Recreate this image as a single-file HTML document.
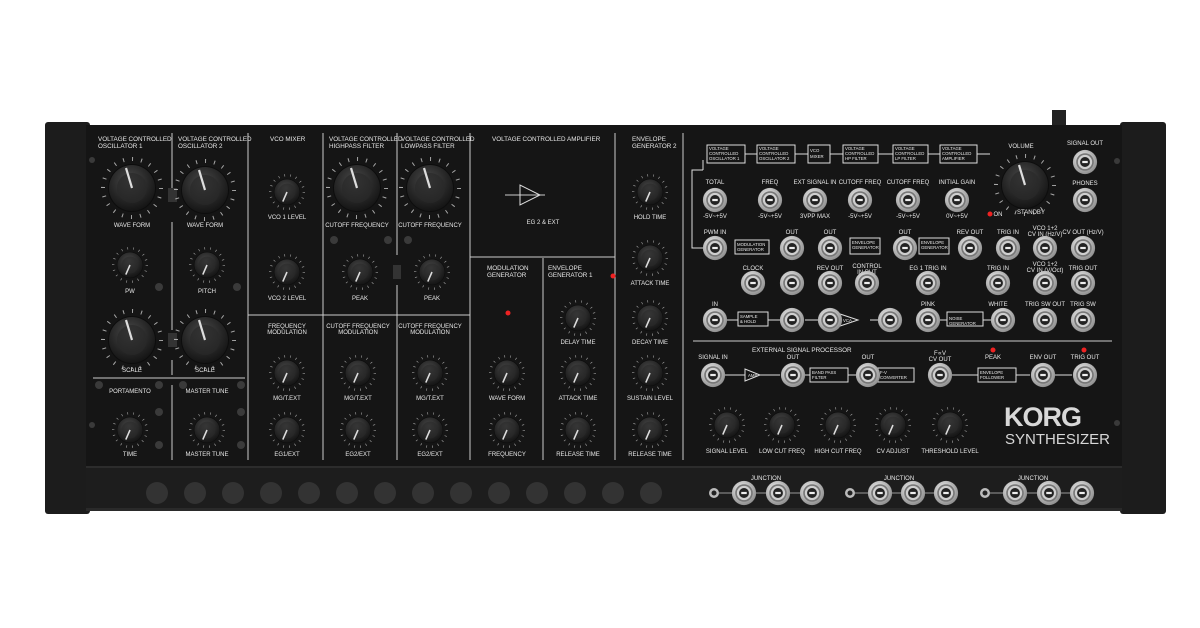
<!DOCTYPE html>
<html><head><meta charset="utf-8"><style>
html,body{margin:0;padding:0;background:#fff;width:1200px;height:628px;overflow:hidden}
svg text{font-family:"Liberation Sans",sans-serif;fill:#e8e8e8}
.t{font-size:6px;text-anchor:middle}
.h{font-size:6.3px}
</style></head><body>
<svg width="1200" height="628" viewBox="0 0 1200 628" xmlns="http://www.w3.org/2000/svg">
<defs>
<radialGradient id="kg" cx="0.45" cy="0.35" r="0.7"><stop offset="0" stop-color="#4a4a4a"/><stop offset="0.6" stop-color="#262626"/><stop offset="1" stop-color="#111"/></radialGradient>
<radialGradient id="jg" cx="0.4" cy="0.35" r="0.7"><stop offset="0" stop-color="#f0f0f0"/><stop offset="1" stop-color="#8a8a8a"/></radialGradient>
<symbol id="kb" viewBox="-30 -30 60 60" overflow="visible">
<circle r="29" fill="none" stroke="#ccc" stroke-width="4" stroke-dasharray="1 8.1" opacity=".8"/>
<circle r="24" fill="#0d0d0d"/><circle r="23" fill="url(#kg)"/><circle r="15" fill="#2a2a2a" opacity=".7"/>
<line x1="0" y1="0" x2="-6" y2="-20" stroke="#ddd" stroke-width="2.2"/>
</symbol>
<symbol id="ks" viewBox="-30 -30 60 60" overflow="visible">
<circle r="28" fill="none" stroke="#ccc" stroke-width="4" stroke-dasharray="1 8.8" opacity=".8"/>
<circle r="22" fill="#0d0d0d"/><circle r="21" fill="url(#kg)"/><circle r="14" fill="#2a2a2a" opacity=".6"/>
<line x1="0" y1="0" x2="-7" y2="16" stroke="#ddd" stroke-width="2.6"/>
</symbol>
<symbol id="jk" viewBox="-10 -10 20 20" overflow="visible">
<circle r="11" fill="url(#jg)"/><circle r="8" fill="#777"/><circle r="6.5" fill="#cfcfcf"/><circle r="4.5" fill="#222"/><rect x="-2.5" y="-1" width="5" height="2" fill="#eee"/>
</symbol>
</defs>
<!-- body -->
<rect x="1052" y="110" width="14" height="15" fill="#222"/>
<rect x="45" y="122" width="45" height="392" rx="3" fill="#1c1c1c"/>
<rect x="1120" y="122" width="46" height="392" rx="3" fill="#1c1c1c"/>
<rect x="86" y="125" width="1036" height="342" fill="#151515"/>
<rect x="86" y="466" width="1036" height="44" fill="#1d1d1d"/>
<rect x="86" y="466" width="1036" height="2" fill="#2c2c2c"/>
<rect x="86" y="508" width="1036" height="3" fill="#2a2a2a"/>
<!-- bottom buttons -->
<g fill="#333">
<circle cx="157" cy="493" r="11"/><circle cx="195" cy="493" r="11"/><circle cx="233" cy="493" r="11"/><circle cx="271" cy="493" r="11"/><circle cx="309" cy="493" r="11"/><circle cx="347" cy="493" r="11"/><circle cx="385" cy="493" r="11"/><circle cx="423" cy="493" r="11"/><circle cx="461" cy="493" r="11"/><circle cx="499" cy="493" r="11"/><circle cx="537" cy="493" r="11"/><circle cx="575" cy="493" r="11"/><circle cx="613" cy="493" r="11"/><circle cx="651" cy="493" r="11"/>
</g>
<!-- junction -->
<g stroke="#999" stroke-width="1"><line x1="714" y1="493" x2="812" y2="493"/><line x1="850" y1="493" x2="946" y2="493"/><line x1="985" y1="493" x2="1082" y2="493"/></g>
<circle cx="714" cy="493" r="5" fill="#bbb"/><circle cx="714" cy="493" r="2.5" fill="#222"/>
<circle cx="850" cy="493" r="5" fill="#bbb"/><circle cx="850" cy="493" r="2.5" fill="#222"/>
<circle cx="985" cy="493" r="5" fill="#bbb"/><circle cx="985" cy="493" r="2.5" fill="#222"/>
<use href="#jk" x="733" y="482" width="22" height="22"/><use href="#jk" x="767" y="482" width="22" height="22"/><use href="#jk" x="801" y="482" width="22" height="22"/>
<use href="#jk" x="869" y="482" width="22" height="22"/><use href="#jk" x="902" y="482" width="22" height="22"/><use href="#jk" x="935" y="482" width="22" height="22"/>
<use href="#jk" x="1004" y="482" width="22" height="22"/><use href="#jk" x="1038" y="482" width="22" height="22"/><use href="#jk" x="1071" y="482" width="22" height="22"/>
<text class="t" x="766" y="480" font-size="4.5">JUNCTION</text><text class="t" x="899" y="480" font-size="4.5">JUNCTION</text><text class="t" x="1033" y="480" font-size="4.5">JUNCTION</text>
<!-- dividers -->
<g stroke="#ccc" stroke-width="1" fill="none">
<line x1="172" y1="133" x2="172" y2="200"/><line x1="172" y1="222" x2="172" y2="330"/><line x1="172" y1="360" x2="172" y2="375"/>
<line x1="172" y1="385" x2="172" y2="460"/>
<line x1="248" y1="133" x2="248" y2="460"/><line x1="323" y1="133" x2="323" y2="460"/><line x1="397" y1="133" x2="397" y2="255"/><line x1="397" y1="285" x2="397" y2="460"/>
<line x1="470" y1="133" x2="470" y2="460"/><line x1="543" y1="258" x2="543" y2="460"/><line x1="615" y1="133" x2="615" y2="460"/><line x1="683" y1="133" x2="683" y2="460"/>
<line x1="248" y1="315" x2="470" y2="315"/><line x1="470" y1="257" x2="615" y2="257"/><line x1="93" y1="378" x2="245" y2="378"/>
<line x1="693" y1="341" x2="1112" y2="341"/>
<line x1="505" y1="195" x2="545" y2="195"/><polygon points="520,185 520,205 540,195" stroke="#ddd"/>
</g>
<!-- headers -->
<g class="h">
<text x="98" y="141">VOLTAGE CONTROLLED</text><text x="98" y="148">OSCILLATOR  1</text>
<text x="178" y="141">VOLTAGE CONTROLLED</text><text x="178" y="148">OSCILLATOR  2</text>
<text x="270" y="141">VCO MIXER</text>
<text x="329" y="141">VOLTAGE CONTROLLED</text><text x="329" y="148">HIGHPASS FILTER</text>
<text x="401" y="141">VOLTAGE CONTROLLED</text><text x="401" y="148">LOWPASS FILTER</text>
<text x="492" y="141">VOLTAGE CONTROLLED AMPLIFIER</text>
<text x="632" y="141">ENVELOPE</text><text x="632" y="148">GENERATOR 2</text>
<text x="487" y="270">MODULATION</text><text x="487" y="277">GENERATOR</text>
<text x="548" y="270">ENVELOPE</text><text x="548" y="277">GENERATOR 1</text>
<text x="752" y="352">EXTERNAL SIGNAL PROCESSOR</text>
</g>
<g class="t" font-size="5">
<text x="287" y="328">FREQUENCY</text><text x="287" y="334">MODULATION</text>
<text x="358" y="328">CUTOFF FREQUENCY</text><text x="358" y="334">MODULATION</text>
<text x="430" y="328">CUTOFF FREQUENCY</text><text x="430" y="334">MODULATION</text>
<text x="132" y="227">WAVE FORM</text><text x="205" y="227">WAVE FORM</text>
<text x="130" y="293">PW</text><text x="207" y="293">PITCH</text>
<text x="132" y="372">SCALE</text><text x="205" y="372">SCALE</text>
<text x="287" y="219">VCO 1 LEVEL</text><text x="287" y="300">VCO 2 LEVEL</text>
<text x="357" y="227">CUTOFF FREQUENCY</text><text x="430" y="227">CUTOFF FREQUENCY</text>
<text x="360" y="300">PEAK</text><text x="432" y="300">PEAK</text>
<text x="287" y="400">MG/T.EXT</text><text x="358" y="400">MG/T.EXT</text><text x="430" y="400">MG/T.EXT</text>
<text x="287" y="456">EG1/EXT</text><text x="358" y="456">EG2/EXT</text><text x="430" y="456">EG2/EXT</text>
<text x="507" y="400">WAVE FORM</text><text x="507" y="456">FREQUENCY</text>
<text x="578" y="344">DELAY TIME</text><text x="578" y="400">ATTACK TIME</text><text x="578" y="456">RELEASE TIME</text>
<text x="650" y="219">HOLD TIME</text><text x="650" y="285">ATTACK TIME</text><text x="650" y="344">DECAY TIME</text><text x="650" y="400">SUSTAIN LEVEL</text><text x="650" y="456">RELEASE TIME</text>
<text x="130" y="393">PORTAMENTO</text><text x="207" y="393">MASTER TUNE</text>
<text x="130" y="456">TIME</text><text x="207" y="456">MASTER TUNE</text>
<text x="543" y="224">EG 2 &amp; EXT</text>
<text x="727" y="453">SIGNAL LEVEL</text><text x="782" y="453">LOW CUT FREQ</text><text x="838" y="453">HIGH CUT FREQ</text><text x="893" y="453">CV ADJUST</text><text x="950" y="453">THRESHOLD LEVEL</text>
<text x="1021" y="148">VOLUME</text><text x="1085" y="145">SIGNAL OUT</text><text x="1085" y="185">PHONES</text><text x="1031" y="214">STANDBY</text><text x="998" y="216">ON</text>
<text x="715" y="184">TOTAL</text><text x="770" y="184">FREQ</text><text x="815" y="184">EXT SIGNAL IN</text><text x="860" y="184">CUTOFF FREQ</text><text x="908" y="184">CUTOFF FREQ</text><text x="957" y="184">INITIAL GAIN</text>
<text x="715" y="218">-5V~+5V</text><text x="770" y="218">-5V~+5V</text><text x="815" y="218">3VPP MAX</text><text x="860" y="218">-5V~+5V</text><text x="908" y="218">-5V~+5V</text><text x="957" y="218">0V~+5V</text>
<text x="715" y="234">PWM IN</text><text x="792" y="234">OUT</text><text x="830" y="234">OUT</text><text x="905" y="234">OUT</text><text x="970" y="234">REV OUT</text><text x="1008" y="234">TRIG IN</text><text x="1045" y="230">VCO 1+2</text><text x="1045" y="236">CV IN (Hz/V)</text><text x="1083" y="234">CV OUT (Hz/V)</text>
<text x="753" y="270">CLOCK</text><text x="830" y="270">REV OUT</text><text x="867" y="268">CONTROL</text><text x="867" y="274">IN PUT</text><text x="928" y="270">EG 1 TRIG IN</text><text x="998" y="270">TRIG IN</text><text x="1045" y="266">VCO 1+2</text><text x="1045" y="272">CV IN (V/Oct)</text><text x="1083" y="270">TRIG OUT</text>
<text x="715" y="306">IN</text><text x="928" y="306">PINK</text><text x="998" y="306">WHITE</text><text x="1045" y="306">TRIG SW OUT</text><text x="1083" y="306">TRIG SW</text>
<text x="713" y="359">SIGNAL IN</text><text x="793" y="359">OUT</text><text x="868" y="359">OUT</text><text x="940" y="355">F∝V</text><text x="940" y="361">CV OUT</text><text x="993" y="359">PEAK</text><text x="1043" y="359">ENV OUT</text><text x="1085" y="359">TRIG OUT</text>
</g>
<!-- block diagram -->
<g stroke="#ddd" stroke-width="1" fill="none">
<rect x="707" y="145" width="38" height="18"/><rect x="757" y="145" width="38" height="18"/><rect x="808" y="145" width="22" height="18"/><rect x="843" y="145" width="35" height="18"/><rect x="893" y="145" width="35" height="18"/><rect x="940" y="145" width="37" height="18"/>
<rect x="735" y="240" width="34" height="14"/><rect x="850" y="238" width="30" height="16"/><rect x="919" y="238" width="30" height="16"/>
<rect x="738" y="312" width="30" height="14"/><rect x="947" y="312" width="36" height="14"/>
<rect x="810" y="368" width="38" height="14"/><rect x="878" y="368" width="36" height="14"/><rect x="978" y="368" width="38" height="14"/>
<path d="M745 154H757M795 154H808M830 154H843M878 154H893M928 154H940M977 154H990M703 160V170M703 170H692V248H703M720 320H738M768 320H780M805 320H820M870 320H880M940 320H947M983 320H992M725 375H745M760 375H780M805 375H810M848 375H856M880 375H878M952 375H978M1016 375H1030M1055 375H1072"/>
<polygon points="745,369 745,381 760,375"/><polygon points="840,314 840,326 858,320"/>
</g>
<g font-size="4.3" fill="#ddd">
<text x="709" y="150">VOLTAGE</text><text x="709" y="155">CONTROLLED</text><text x="709" y="160">OSCILLATOR 1</text>
<text x="759" y="150">VOLTAGE</text><text x="759" y="155">CONTROLLED</text><text x="759" y="160">OSCILLATOR 2</text>
<text x="810" y="152">VCO</text><text x="810" y="158">MIXER</text>
<text x="845" y="150">VOLTAGE</text><text x="845" y="155">CONTROLLED</text><text x="845" y="160">HP FILTER</text>
<text x="895" y="150">VOLTAGE</text><text x="895" y="155">CONTROLLED</text><text x="895" y="160">LP FILTER</text>
<text x="942" y="150">VOLTAGE</text><text x="942" y="155">CONTROLLED</text><text x="942" y="160">AMPLIFIER</text>
<text x="737" y="246">MODULATION</text><text x="737" y="251">GENERATOR</text>
<text x="852" y="244">ENVELOPE</text><text x="852" y="249">GENERATOR</text>
<text x="921" y="244">ENVELOPE</text><text x="921" y="249">GENERATOR</text>
<text x="740" y="318">SAMPLE</text><text x="740" y="323">&amp; HOLD</text>
<text x="949" y="320">NOISE</text><text x="949" y="325">GENERATOR</text>
<text x="812" y="374">BAND PASS</text><text x="812" y="379">FILTER</text>
<text x="880" y="374">F-V</text><text x="880" y="379">CONVERTER</text>
<text x="980" y="374">ENVELOPE</text><text x="980" y="379">FOLLOWER</text>
<text x="748" y="377">AMP</text><text x="843" y="322">VCA</text>
</g>
<!-- LEDs -->
<g fill="#e22"><circle cx="508" cy="313" r="2.5"/><circle cx="613" cy="276" r="2.5"/><circle cx="990" cy="214" r="2.5"/><circle cx="993" cy="350" r="2.5"/><circle cx="1084" cy="350" r="2.5"/></g>
<!-- screws/buttons small -->
<g fill="#3a3a3a"><circle cx="92" cy="160" r="3"/><circle cx="1117" cy="161" r="3"/><circle cx="1117" cy="423" r="3"/><circle cx="92" cy="425" r="3"/>
<circle cx="159" cy="287" r="4"/><circle cx="237" cy="287" r="4"/><circle cx="334" cy="240" r="4"/><circle cx="388" cy="240" r="4"/><circle cx="408" cy="240" r="4"/>
<circle cx="99" cy="385" r="4"/><circle cx="159" cy="385" r="4"/><circle cx="183" cy="385" r="4"/><circle cx="241" cy="385" r="4"/><circle cx="159" cy="412" r="4"/><circle cx="241" cy="412" r="4"/><circle cx="159" cy="445" r="4"/><circle cx="241" cy="445" r="4"/></g>
<rect x="168" y="188" width="9" height="14" fill="#333"/><rect x="168" y="333" width="9" height="14" fill="#333"/><rect x="393" y="265" width="8" height="14" fill="#333"/>
<!-- knobs big -->
<use href="#kb" x="102" y="158" width="60" height="60"/><use href="#kb" x="175" y="160" width="60" height="60"/>
<use href="#kb" x="102" y="310" width="60" height="60"/><use href="#kb" x="175" y="310" width="60" height="60"/>
<use href="#kb" x="327" y="158" width="60" height="60"/><use href="#kb" x="400" y="158" width="60" height="60"/>
<use href="#kb" x="995" y="155" width="60" height="60"/>
<!-- knobs small -->
<g>
<use href="#ks" x="112" y="247" width="36" height="36"/><use href="#ks" x="189" y="247" width="36" height="36"/>
<use href="#ks" x="269" y="174" width="36" height="36"/><use href="#ks" x="269" y="254" width="36" height="36"/>
<use href="#ks" x="342" y="254" width="36" height="36"/><use href="#ks" x="414" y="254" width="36" height="36"/>
<use href="#ks" x="269" y="355" width="36" height="36"/><use href="#ks" x="269" y="412" width="36" height="36"/>
<use href="#ks" x="340" y="355" width="36" height="36"/><use href="#ks" x="340" y="412" width="36" height="36"/>
<use href="#ks" x="412" y="355" width="36" height="36"/><use href="#ks" x="412" y="412" width="36" height="36"/>
<use href="#ks" x="489" y="355" width="36" height="36"/><use href="#ks" x="489" y="412" width="36" height="36"/>
<use href="#ks" x="560" y="300" width="36" height="36"/><use href="#ks" x="560" y="355" width="36" height="36"/><use href="#ks" x="560" y="412" width="36" height="36"/>
<use href="#ks" x="632" y="174" width="36" height="36"/><use href="#ks" x="632" y="240" width="36" height="36"/><use href="#ks" x="632" y="300" width="36" height="36"/><use href="#ks" x="632" y="355" width="36" height="36"/><use href="#ks" x="632" y="412" width="36" height="36"/>
<use href="#ks" x="112" y="412" width="36" height="36"/><use href="#ks" x="189" y="412" width="36" height="36"/>
<use href="#ks" x="709" y="407" width="36" height="36"/><use href="#ks" x="764" y="407" width="36" height="36"/><use href="#ks" x="820" y="407" width="36" height="36"/><use href="#ks" x="875" y="407" width="36" height="36"/><use href="#ks" x="932" y="407" width="36" height="36"/>
</g>
<!-- jacks -->
<g>
<use href="#jk" x="704" y="189" width="22" height="22"/><use href="#jk" x="759" y="189" width="22" height="22"/><use href="#jk" x="804" y="189" width="22" height="22"/><use href="#jk" x="849" y="189" width="22" height="22"/><use href="#jk" x="897" y="189" width="22" height="22"/><use href="#jk" x="946" y="189" width="22" height="22"/>
<use href="#jk" x="1074" y="151" width="22" height="22"/><use href="#jk" x="1074" y="189" width="22" height="22"/>
<use href="#jk" x="704" y="237" width="22" height="22"/><use href="#jk" x="781" y="237" width="22" height="22"/><use href="#jk" x="819" y="237" width="22" height="22"/><use href="#jk" x="894" y="237" width="22" height="22"/><use href="#jk" x="959" y="237" width="22" height="22"/><use href="#jk" x="997" y="237" width="22" height="22"/><use href="#jk" x="1034" y="237" width="22" height="22"/><use href="#jk" x="1072" y="237" width="22" height="22"/>
<use href="#jk" x="742" y="272" width="22" height="22"/><use href="#jk" x="781" y="272" width="22" height="22"/><use href="#jk" x="819" y="272" width="22" height="22"/><use href="#jk" x="856" y="272" width="22" height="22"/><use href="#jk" x="917" y="272" width="22" height="22"/><use href="#jk" x="987" y="272" width="22" height="22"/><use href="#jk" x="1034" y="272" width="22" height="22"/><use href="#jk" x="1072" y="272" width="22" height="22"/>
<use href="#jk" x="704" y="309" width="22" height="22"/><use href="#jk" x="781" y="309" width="22" height="22"/><use href="#jk" x="819" y="309" width="22" height="22"/><use href="#jk" x="879" y="309" width="22" height="22"/><use href="#jk" x="917" y="309" width="22" height="22"/><use href="#jk" x="992" y="309" width="22" height="22"/><use href="#jk" x="1034" y="309" width="22" height="22"/><use href="#jk" x="1072" y="309" width="22" height="22"/>
<use href="#jk" x="702" y="364" width="22" height="22"/><use href="#jk" x="782" y="364" width="22" height="22"/><use href="#jk" x="857" y="364" width="22" height="22"/><use href="#jk" x="929" y="364" width="22" height="22"/><use href="#jk" x="1032" y="364" width="22" height="22"/><use href="#jk" x="1074" y="364" width="22" height="22"/>
</g>
<!-- logo -->
<text x="1004" y="426" font-size="27" font-weight="bold" style="fill:#d8d8d8;letter-spacing:-1px">KORG</text>
<text x="1005" y="444" font-size="15" style="fill:#d8d8d8">SYNTHESIZER</text>
</svg>
</body></html>
